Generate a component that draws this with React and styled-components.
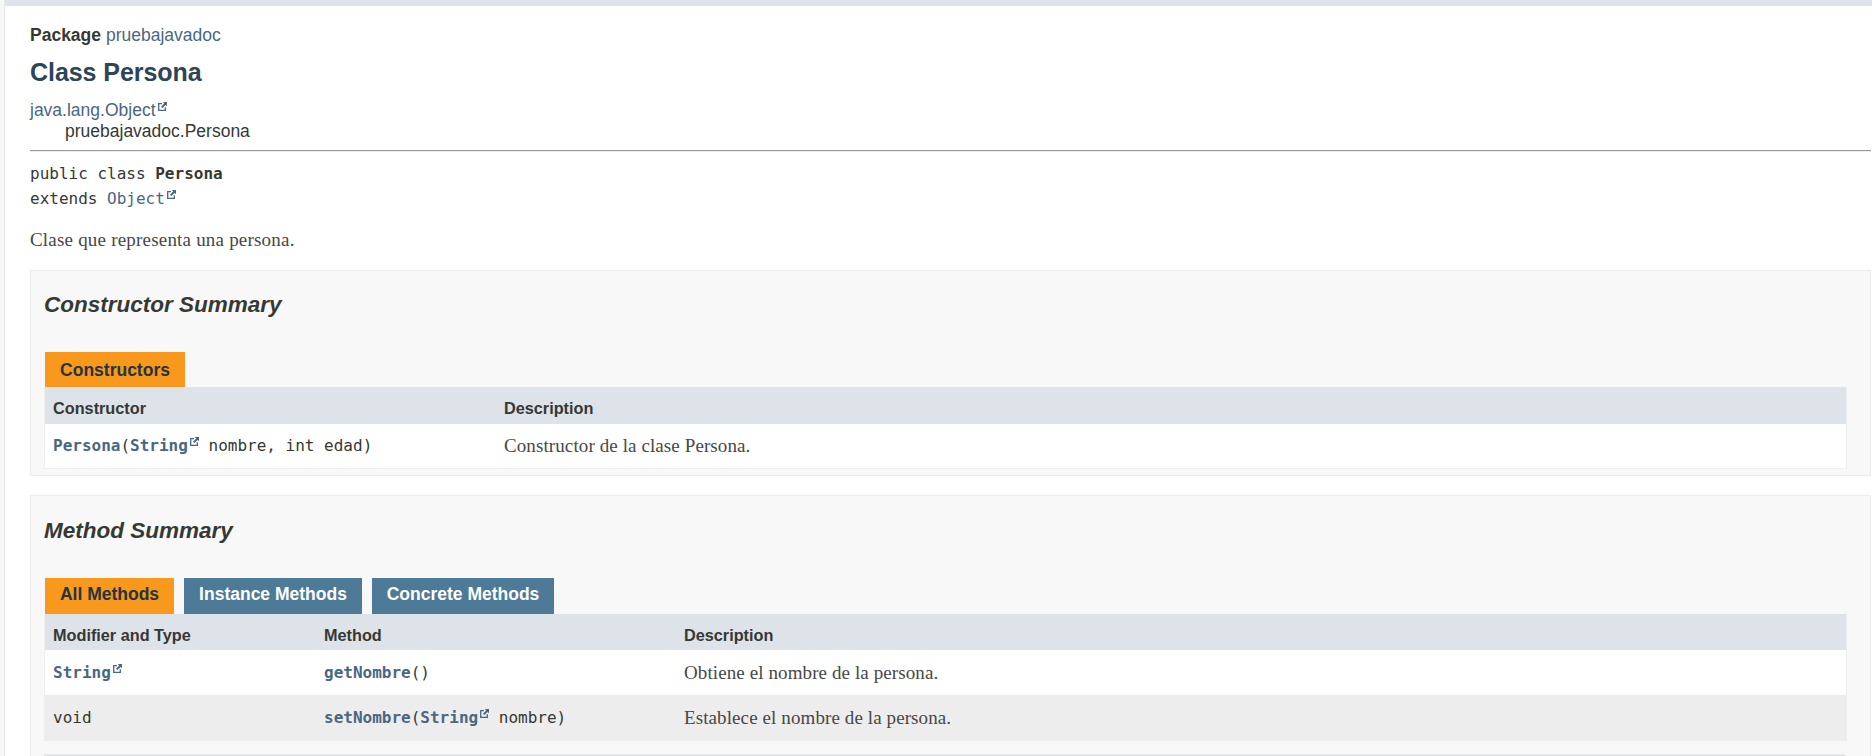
import React from "react";
import styled, { createGlobalStyle } from "styled-components";

const sans = `"Liberation Sans", Arial, sans-serif`;
const serif = `"Liberation Serif", Georgia, serif`;
const mono = `"DejaVu Sans Mono", monospace`;

const Global = createGlobalStyle`
  * { box-sizing: border-box; }
  body { margin: 0; background: #fff; color: #353833; font: 17.5px/20px ${sans}; overflow: hidden; }
`;

const Page = styled.div`
  display: flex;
  width: 1872px;
  height: 756px;
  overflow: hidden;
`;
const Gutter = styled.div`
  flex: none;
  width: 5px;
  background: #f7f7f7;
  border-right: 1px solid #e9e9e9;
`;
const Main = styled.main`
  flex: 1;
  min-width: 0;
  border-top: 6px solid #dee3e9;
  padding: 19px 1px 0 25px;
`;
const Link = styled.a`
  color: #4a6782;
  font-weight: ${(p) => (p.$bold ? 700 : "inherit")};
`;
const PackageLine = styled.div`
  height: 20px;
`;
const Title = styled.h1`
  margin: 12px 0 13px;
  font-size: 25px;
  line-height: 30px;
  letter-spacing: -0.05px;
  color: #2c4557;
`;
const Inheritance = styled.div`
  line-height: 21px;
  padding-left: ${(p) => (p.$nested ? "35px" : 0)};
`;
const Rule = styled.hr`
  margin: 8px 0 9px;
  height: 2px;
  border: 0;
  border-top: 1px solid #999;
  background: #ededed;
`;
const Code = styled.span`
  font-family: ${mono};
  font-size: 16px;
  white-space: pre;
`;
const Signature = styled(Code)`
  display: block;
  line-height: 25px;
`;
const Prose = styled.span`
  font-family: ${serif};
  font-size: 19px;
  letter-spacing: 0.1px;
  color: #474747;
`;
const Intro = styled(Prose)`
  display: block;
  margin: 19px 0 20px;
  line-height: 20px;
  letter-spacing: 0.2px;
`;
const Section = styled.section`
  margin-bottom: 19px;
  padding: 19px 23px 6px 13px;
  border: 1px solid #ededed;
  background: #f8f8f8;
`;
const Heading = styled.h2`
  margin: 0 0 ${(p) => p.$gap}px;
  padding-top: ${(p) => p.$drop || 0}px;
  font-size: 22.5px;
  line-height: 30px;
  font-style: italic;
`;
const Tabs = styled.div`
  display: flex;
  gap: 10px;
  padding-left: 1px;
`;
const Tab = styled.button`
  height: ${(p) => p.$height}px;
  width: ${(p) => p.$width}px;
  padding: 0 0 ${(p) => p.$lift || 0}px;
  border: 0;
  font: bold 17.5px/20px ${sans};
  text-align: center;
  white-space: nowrap;
  color: ${(p) => (p.$active ? "#253441" : "#fff")};
  background: ${(p) => (p.$active ? "#f8981d" : "#4d7a97")};
`;
const Table = styled.div`
  border: 1px solid #eee;
  border-top: 0;
`;
const Row = styled.div`
  display: grid;
  grid-template-columns: ${(p) => p.$cols};
  align-items: center;
  height: ${(p) => p.$height}px;
  padding-left: 8px;
  background: ${(p) => (p.$alt ? "#ededed" : "#fff")};
`;
const HeadRow = styled(Row)`
  padding-top: ${(p) => p.$top}px;
  background: #dee3e9;
  font-size: 16.25px;
  font-weight: 700;
`;
const NextTable = styled.div`
  height: 20px;
  margin: 13px 2px 0 0;
  border: 1px solid #e6e8ea;
  background: #dee3e9;
`;
const Icon = styled.svg`
  width: 9px;
  height: 9px;
  margin-left: 2px;
  vertical-align: 5px;
`;

const External = () => (
  <Icon viewBox="0 0 9 9" aria-hidden="true">
    <path d="M4 1.7H.7v6.6h6.6V5.2" fill="none" stroke="#4a6782" strokeWidth="1.3" />
    <path d="M4.8 0H9V4.2L7.6 2.9L4.4 6.1L3 4.7L6.2 1.4z" fill="#4a6782" />
  </Icon>
);

const ctorCols = "451px 1fr";
const methodCols = "271px 360px 1fr";

export default function App() {
  return (
    <Page>
      <Global />
      <Gutter />
      <Main>
        <PackageLine><b>Package</b> <Link>pruebajavadoc</Link></PackageLine>
        <Title>Class Persona</Title>
        <Inheritance><Link>java.lang.Object<External /></Link></Inheritance>
        <Inheritance $nested>pruebajavadoc.Persona</Inheritance>
        <Rule />
        <Signature>public class <b>Persona</b></Signature>
        <Signature>extends <Link>Object<External /></Link></Signature>
        <Intro>Clase que representa una persona.</Intro>
        <Section>
          <Heading $gap={32}>Constructor Summary</Heading>
          <Tabs><Tab $active $height={35} $width={140}>Constructors</Tab></Tabs>
          <Table>
            <HeadRow $cols={ctorCols} $height={37} $top={4}><span>Constructor</span><span>Description</span></HeadRow>
            <Row $cols={ctorCols} $height={44}>
              <Code><Link $bold>Persona</Link>(<Link $bold>String<External /></Link> nombre, int edad)</Code>
              <Prose>Constructor de la clase Persona.</Prose>
            </Row>
          </Table>
        </Section>
        <Section>
          <Heading $gap={32} $drop={1}>Method Summary</Heading>
          <Tabs>
            <Tab $active $height={36} $width={129} $lift={4}>All Methods</Tab>
            <Tab $height={36} $width={178} $lift={4}>Instance Methods</Tab>
            <Tab $height={36} $width={182} $lift={4}>Concrete Methods</Tab>
          </Tabs>
          <Table>
            <HeadRow $cols={methodCols} $height={36} $top={6}><span>Modifier and Type</span><span>Method</span><span>Description</span></HeadRow>
            <Row $cols={methodCols} $height={45}>
              <Code><Link $bold>String<External /></Link></Code>
              <Code><Link $bold>getNombre</Link>()</Code>
              <Prose>Obtiene el nombre de la persona.</Prose>
            </Row>
            <Row $cols={methodCols} $height={45} $alt>
              <Code>void</Code>
              <Code><Link $bold>setNombre</Link>(<Link $bold>String<External /></Link> nombre)</Code>
              <Prose>Establece el nombre de la persona.</Prose>
            </Row>
          </Table>
          <NextTable />
        </Section>
      </Main>
    </Page>
  );
}
